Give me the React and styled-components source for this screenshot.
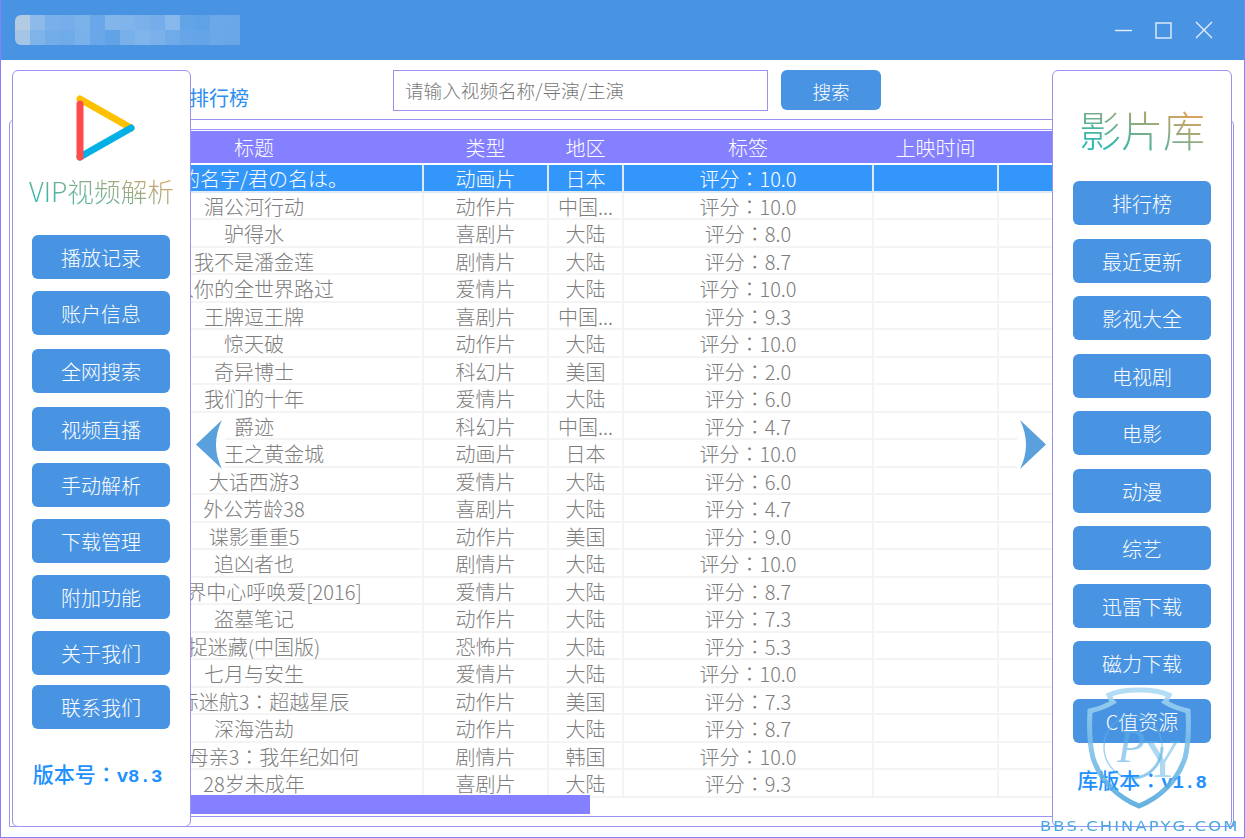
import React from "react";
import styled, { createGlobalStyle } from "styled-components";

const GlobalStyle = createGlobalStyle`
  html, body {
    margin: 0;
    padding: 0;
    background: #fff;
  }
  * {
    box-sizing: border-box;
  }
  body {
    font-family: "Noto Sans CJK SC", "Liberation Sans", sans-serif;
    font-weight: 300;
  }
`;

const Window = styled.div`
  position: relative;
  width: 1245px;
  height: 838px;
  overflow: hidden;
  background: #fff;
  border: 1px solid #8580ff;
  border-top: 0;
`;

const TitleBar = styled.div`
  height: 60px;
  margin: 0 -1px;
  background: #4994e2;
  display: flex;
  align-items: center;
  justify-content: space-between;
  padding: 0 32px 0 15px;
`;

const Mosaic = styled.div`
  display: grid;
  grid-template-columns: repeat(15, 15px);
  grid-auto-rows: 15px;
  border-radius: 6px 0 0 6px;
  overflow: hidden;
`;

const MosaicCell = styled.div`
  background: ${({ $c }) => $c};
`;

const WindowControls = styled.div`
  display: flex;
  align-items: center;
  gap: 23px;
`;

const Content = styled.div`
  padding: 10px 10px 0 8px;
`;

const TopBar = styled.div`
  height: 49px;
  display: flex;
  align-items: flex-start;
  padding-left: 180px;
`;

const RankTitle = styled.div`
  width: 204px;
  padding-top: 12px;
  font-size: 20px;
  line-height: 32px;
  color: #2b8ef0;
  font-weight: 400;
`;

const SearchBox = styled.input`
  width: 375px;
  height: 41px;
  padding: 0 11px 2px;
  border: 1px solid #9a94f0;
  outline: none;
  font-family: inherit;
  font-weight: 300;
  font-size: 18.6px;
  color: #777;
  &::placeholder {
    color: #777;
    opacity: 1;
  }
`;

const SearchButton = styled.button`
  width: 100px;
  height: 40px;
  margin-left: 13px;
  border: 0;
  border-radius: 6px;
  background: #4994e2;
  color: #fff;
  font-family: inherit;
  font-weight: 300;
  font-size: 18.6px;
`;

const Frame = styled.div`
  height: 708px;
  border: 1px solid #9a94f0;
  border-radius: 6px 6px 0 0;
  padding: 9px 3px 0;
  overflow: hidden;
`;

const TableBox = styled.div`
  height: 688px;
  border-top: 1px solid #9a94f0;
  border-bottom: 1px solid #9a94f0;
  padding-top: 1px;
  overflow: hidden;
`;

const Head = styled.div`
  display: grid;
  grid-template-columns: 72px 338px 125px 75px 250px 125px 1fr;
  height: 32px;
  background: #8580ff;
  margin-bottom: 2px;
`;

const HeadCell = styled.div`
  font-size: 20px;
  line-height: 34px;
  text-align: center;
  color: #fff;
`;

const Row = styled.div`
  display: grid;
  grid-template-columns: 73px 338px 125px 75px 250px 125px 1fr;
  height: 27.5px;
  background: ${({ $active }) => ($active ? "#3296fa" : "#fff")};
  border-bottom: 2px solid ${({ $active }) => ($active ? "#dfe9f5" : "#f4f4f4")};
`;

const Cell = styled.div`
  font-size: 20px;
  line-height: 27px;
  text-align: center;
  white-space: nowrap;
  padding: 0 8px;
  color: ${({ $active }) => ($active ? "#fff" : "#7d7d7d")};
  border-right: 2px solid ${({ $active }) => ($active ? "#dfe9f5" : "#f4f4f4")};
`;

const Colon = styled.span`
  font-family: "Noto Sans CJK TC", "Noto Sans CJK SC", sans-serif;
`;

const Spacer = styled.div``;

const ScrollTrack = styled.div`
  height: 19px;
  margin-top: -3px;
  padding-left: 177px;
  position: relative;
`;

const ScrollThumb = styled.div`
  width: 400px;
  height: 19px;
  background: #8580ff;
`;

const SidePanel = styled.aside`
  position: absolute;
  top: 70px;
  left: ${({ $left }) => $left}px;
  width: ${({ $w }) => $w}px;
  height: 757px;
  background: #fff;
  border: 1px solid #9a94f0;
  border-radius: 6px;
  display: flex;
  flex-direction: column;
  align-items: center;
`;

const Logo = styled.svg`
  display: block;
  margin-top: 23px;
  margin-left: 11px;
`;

const AppName = styled.div`
  margin-top: 6px;
  font-size: 26.7px;
  line-height: 38px;
  white-space: nowrap;
  background: linear-gradient(20deg, #27b7b0 10%, #e8a35f 95%);
  -webkit-background-clip: text;
  background-clip: text;
  color: transparent;
`;

const LibraryName = styled.div`
  margin-top: 32px;
  font-size: 42px;
  line-height: 52px;
  background: linear-gradient(20deg, #1db9b2 15%, #f0a055 90%);
  -webkit-background-clip: text;
  background-clip: text;
  color: transparent;
`;

const LeftMenu = styled.div`
  margin-top: 25px;
  margin-right: 1px;
  display: flex;
  flex-direction: column;
`;

const RightMenu = styled.div`
  margin-top: 26px;
  display: flex;
  flex-direction: column;
  gap: 13.5px;
`;

const MenuButton = styled.button`
  width: 138px;
  height: 44px;
  margin-top: ${({ $gap }) => $gap || 0}px;
  border: 0;
  border-radius: 6px;
  background: #4994e2;
  color: #fff;
  font-family: inherit;
  font-weight: 300;
  font-size: 20px;
  line-height: 42px;
  padding: 2px 0 0;
`;

const Version = styled.div`
  margin-top: ${({ $top }) => $top}px;
  margin-right: ${({ $shift }) => $shift || 0}px;
  font-size: 21px;
  line-height: 30px;
  font-weight: 500;
  color: #1e90ff;
  white-space: nowrap;
`;

const VersionNumber = styled.span`
  font-family: "Liberation Mono", monospace;
  font-weight: 700;
  font-size: 19px;
`;

const Arrow = styled.div`
  position: absolute;
  top: 420px;
  left: ${({ $left }) => $left}px;
  width: 34px;
  height: 49px;
  background: #fff;
  display: flex;
  align-items: center;
  justify-content: center;
`;

const Shield = styled.svg`
  position: absolute;
  left: 1086px;
  top: 686px;
  pointer-events: none;
`;

const WatermarkText = styled.div`
  position: absolute;
  left: 1039px;
  top: 817px;
  font-family: "DejaVu Sans", sans-serif;
  font-weight: 400;
  font-size: 14px;
  line-height: 18px;
  letter-spacing: 1.8px;
  color: #4aa8e0;
  transform: scaleX(1.17);
  transform-origin: left center;
  white-space: nowrap;
`;

const mosaic = [
  "#b3cae3", "#8dbae8", "#79b0ea", "#75aeea", "#7cb2ea", "#6aa7e8", "#82b6eb", "#80b5eb", "#7ab1ea", "#74ade9", "#86b8ec", "#63a4e7", "#5fa2e6", "#6ba8e8", "#69a7e8",
  "#a5c4e6", "#7eb4ea", "#72ace9", "#6fabe9", "#79b1ea", "#6aa7e8", "#62a3e7", "#78b0ea", "#80b5eb", "#7ab1ea", "#70abe9", "#66a6e8", "#64a4e7", "#6ba8e8", "#68a6e8",
];

const leftItems = [
  ["播放记录", 0],
  ["账户信息", 12],
  ["全网搜索", 14],
  ["视频直播", 14],
  ["手动解析", 12],
  ["下载管理", 12],
  ["附加功能", 12],
  ["关于我们", 12],
  ["联系我们", 10],
];

const rightItems = ["排行榜", "最近更新", "影视大全", "电视剧", "电影", "动漫", "综艺", "迅雷下载", "磁力下载", "C值资源"];

const movies = [
  ["你的名字/君の名は。", "动画片", "日本", "10.0"],
  ["湄公河行动", "动作片", "中国...", "10.0"],
  ["驴得水", "喜剧片", "大陆", "8.0"],
  ["我不是潘金莲", "剧情片", "大陆", "8.7"],
  ["从你的全世界路过", "爱情片", "大陆", "10.0"],
  ["王牌逗王牌", "喜剧片", "中国...", "9.3"],
  ["惊天破", "动作片", "大陆", "10.0"],
  ["奇异博士", "科幻片", "美国", "2.0"],
  ["我们的十年", "爱情片", "大陆", "6.0"],
  ["爵迹", "科幻片", "中国...", "4.7"],
  ["航海王之黄金城", "动画片", "日本", "10.0"],
  ["大话西游3", "爱情片", "大陆", "6.0"],
  ["外公芳龄38", "喜剧片", "大陆", "4.7"],
  ["谍影重重5", "动作片", "美国", "9.0"],
  ["追凶者也", "剧情片", "大陆", "10.0"],
  ["在世界中心呼唤爱[2016]", "爱情片", "大陆", "8.7"],
  ["盗墓笔记", "动作片", "大陆", "7.3"],
  ["捉迷藏(中国版)", "恐怖片", "大陆", "5.3"],
  ["七月与安生", "爱情片", "大陆", "10.0"],
  ["星际迷航3：超越星辰", "动作片", "美国", "7.3"],
  ["深海浩劫", "动作片", "大陆", "8.7"],
  ["年轻母亲3：我年纪如何", "剧情片", "韩国", "10.0"],
  ["28岁未成年", "喜剧片", "大陆", "9.3"],
];

// the full-width colon sits in the middle of its cell in the reference
const withColon = (text) => {
  const [before, after] = text.split("：");
  if (after === undefined) return text;
  return (
    <>
      {before}
      <Colon>：</Colon>
      {after}
    </>
  );
};

const App = () => {
  return (
    <Window>
      <GlobalStyle />
      <TitleBar>
        <Mosaic>
          {mosaic.map((c, i) => (
            <MosaicCell key={i} $c={c} />
          ))}
        </Mosaic>
        <WindowControls>
          <svg width="17" height="17" viewBox="0 0 17 17">
            <path d="M0 8.5H17" stroke="#e4eefa" strokeWidth="1.4" />
          </svg>
          <svg width="17" height="17" viewBox="0 0 17 17">
            <rect x="1" y="1" width="15" height="15" fill="none" stroke="#e4eefa" strokeWidth="1.4" />
          </svg>
          <svg width="18" height="18" viewBox="0 0 18 18">
            <path d="M1 1L17 17M17 1L1 17" stroke="#e4eefa" strokeWidth="1.3" />
          </svg>
        </WindowControls>
      </TitleBar>

      <Content>
        <TopBar>
          <RankTitle>排行榜</RankTitle>
          <SearchBox placeholder="请输入视频名称/导演/主演" readOnly />
          <SearchButton>搜索</SearchButton>
        </TopBar>
        <Frame>
          <TableBox>
            <Head>
              <Spacer />
              <HeadCell>标题</HeadCell>
              <HeadCell>类型</HeadCell>
              <HeadCell>地区</HeadCell>
              <HeadCell>标签</HeadCell>
              <HeadCell>上映时间</HeadCell>
              <Spacer />
            </Head>
            {movies.map(([title, type, area, score], i) => (
              <Row key={title} $active={i === 0}>
                <Spacer />
                <Cell $active={i === 0}>{withColon(title)}</Cell>
                <Cell $active={i === 0}>{type}</Cell>
                <Cell $active={i === 0}>{area}</Cell>
                <Cell $active={i === 0}>{withColon(`评分：${score}`)}</Cell>
                <Cell $active={i === 0} />
                <Spacer />
              </Row>
            ))}
            <ScrollTrack>
              <ScrollThumb />
            </ScrollTrack>
          </TableBox>
        </Frame>
      </Content>

      <SidePanel $left={11} $w={179}>
        <Logo width="64" height="72" viewBox="0 0 64 72">
          <path d="M5 5L56 34" stroke="#ffc000" strokeWidth="7" strokeLinecap="round" />
          <path d="M5 63L56 34" stroke="#00b0e6" strokeWidth="7" strokeLinecap="round" />
          <path d="M5 10V63" stroke="#ff4b4b" strokeWidth="7" strokeLinecap="round" />
        </Logo>
        <AppName>VIP视频解析</AppName>
        <LeftMenu>
          {leftItems.map(([label, gap]) => (
            <MenuButton key={label} $gap={gap}>{label}</MenuButton>
          ))}
        </LeftMenu>
        <Version $top={29} $shift={8}>版本号<Colon>：</Colon><VersionNumber>v8.3</VersionNumber></Version>
      </SidePanel>

      <SidePanel $left={1051} $w={180}>
        <LibraryName>影片库</LibraryName>
        <RightMenu>
          {rightItems.map((label) => (
            <MenuButton key={label}>{label}</MenuButton>
          ))}
        </RightMenu>
        <Version $top={21}>库版本<Colon>：</Colon><VersionNumber>v1.8</VersionNumber></Version>
      </SidePanel>

      <Arrow $left={190}>
        <svg width="28" height="49" viewBox="0 0 28 49">
          <path d="M2 24.5L28 0Q16 24.5 28 49Z" fill="#5aa0dc" />
        </svg>
      </Arrow>
      <Arrow $left={1016}>
        <svg width="28" height="49" viewBox="0 0 28 49">
          <path d="M26 24.5L0 0Q12 24.5 0 49Z" fill="#5aa0dc" />
        </svg>
      </Arrow>

      <Shield width="106" height="124" viewBox="0 0 106 124" fill="none">
        <defs>
          <linearGradient id="shieldStroke" x1="0" y1="0" x2="0" y2="1">
            <stop offset="0" stopColor="#a8d8f4" />
            <stop offset="1" stopColor="#4aa4dc" />
          </linearGradient>
        </defs>
        <path
          d="M52 4C62 4 74 5 82 9C80 14 79 15 78 16C84 20 93 23 101 25C102 42 101 60 98 72C90 96 72 112 52 120C32 112 14 96 6 72C3 60 2 42 3 25C11 23 20 20 26 16C25 15 24 14 22 9C30 5 42 4 52 4Z"
          stroke="url(#shieldStroke)"
          strokeOpacity="0.85"
          strokeWidth="5"
        />
        <ellipse cx="46" cy="61" rx="29" ry="31" stroke="#5cb1e4" strokeOpacity="0.55" strokeWidth="1.5" />
        <path d="M46 92C62 92 75 78 75 61" stroke="#5cb1e4" strokeOpacity="0.45" strokeWidth="3.5" />
        <text x="30" y="76" fontFamily="Liberation Serif" fontSize="46" fontStyle="italic" fill="#5cb1e4" fillOpacity="0.6">P</text>
        <text x="56" y="91" fontFamily="Liberation Serif" fontSize="54" fill="#5cb1e4" fillOpacity="0.5">Y</text>
      </Shield>
      <WatermarkText>BBS.CHINAPYG.COM</WatermarkText>
    </Window>
  );
};

export default App;
